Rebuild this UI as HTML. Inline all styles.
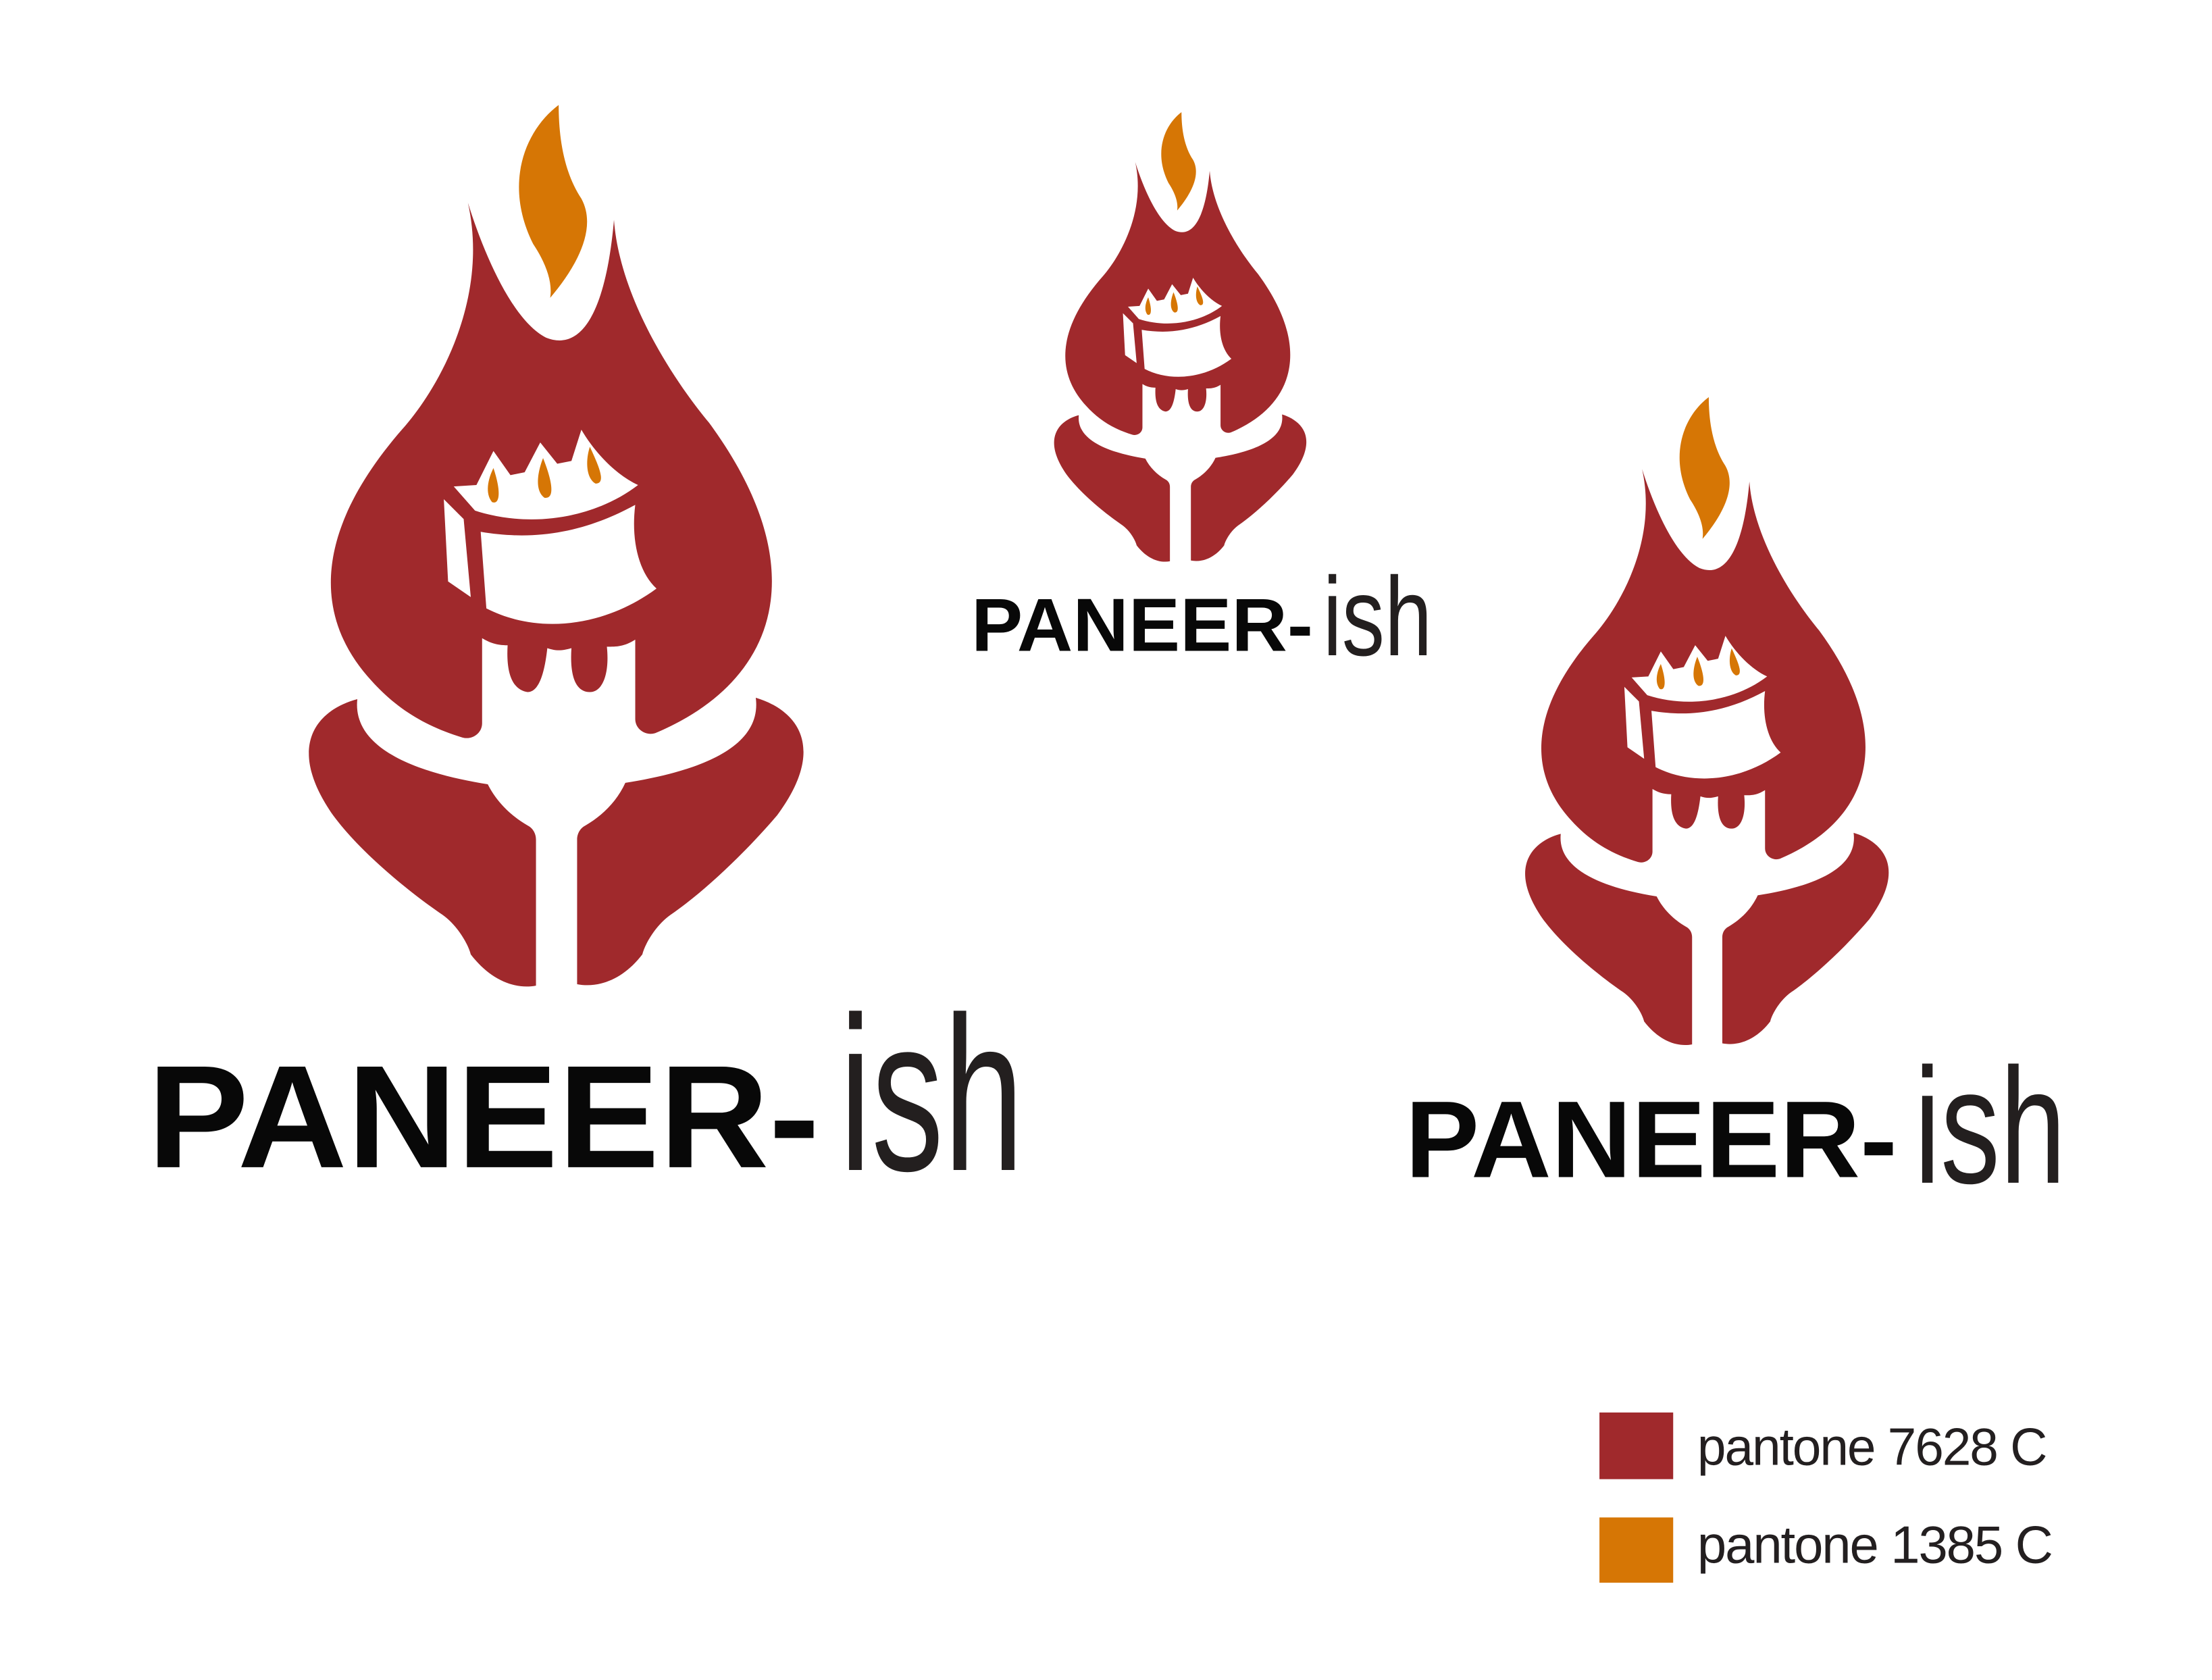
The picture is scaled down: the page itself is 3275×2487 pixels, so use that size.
<!DOCTYPE html>
<html><head><meta charset="utf-8"><style>
html,body{margin:0;padding:0;background:#fff;}
svg{display:block;}
</style></head><body>
<svg width="3275" height="2487" viewBox="0 0 1560 1184.6" xmlns="http://www.w3.org/2000/svg">
<defs>
<g id="logo">
  <path fill="#d67605" d="M394,74 C370,92 355,130 376,172 C384,184 390,198 388,210 C405,190 422,162 410,140 C398,122 394,98 394,74 Z"/>
  <path fill="#a0292c" d="M330,143 C340,175 360,225 385,238 C420,252 430,190 433,155 C437,210 475,268 500,298 C575,400 550,480 462,517 C455,519 448,514 448,507 L448,451 C440,456 435,456 428,456 C430,475 425,488 416,488 C404,488 402,472 403,457 C396,459 392,459 386,457 C384,475 380,488 372,488 C360,486 357,472 358,455 C350,455 345,453 340,450 L340,510 C340,517 333,522 326,520 C300,512 280,500 262,480 C225,440 215,380 286,300 C310,272 345,210 330,143 Z"/>
  <path fill="#fff" d="M320,343 L336,342 L348,318 L360,335 L370,333 L381,312 L393,327 L403,325 L410,303 C420,320 435,335 450,342 C420,365 375,373 335,360 Z"/>
  <path fill="#fff" d="M339,375 C380,382 415,374 448,356 C445,380 450,403 463,415 C425,443 378,447 343,429 Z"/>
  <path fill="#fff" d="M313,352 L327,366 L332,421 L316,410 Z"/>
  <path fill="#d67605" d="M348,330 C344,338 342,348 347,354 C352,356 354,348 348,330 Z"/>
  <path fill="#d67605" d="M383,323 C379,333 377,346 384,351 C392,352 389,338 383,323 Z"/>
  <path fill="#d67605" d="M416,315 C413,324 413,337 420,341 C428,341 422,328 416,315 Z"/>
  <path fill="#a0292c" d="M252,493 C225,500 200,525 235,575 C255,602 290,630 312,645 C322,652 330,665 332,673 C345,690 362,698 378,695 L378,592 C378,588 376,584 372,582 C360,575 350,565 344,553 C300,546 248,530 252,493 Z"/>
  <path fill="#a0292c" d="M533,492 C560,500 585,525 548,575 C525,602 495,630 473,645 C463,652 455,665 453,673 C440,690 423,697 407,694 L407,592 C407,588 409,584 413,582 C425,575 435,565 441,552 C485,545 538,530 533,492 Z"/>
</g>
</defs>
<use href="#logo"/>
<use href="#logo" transform="translate(632.3,41.3) scale(0.51)"/>
<use href="#logo" transform="translate(915.5,225.6) scale(0.735)"/>

<g font-family="'Liberation Sans',sans-serif" font-weight="bold" fill="#080808">
  <text x="104" y="823" font-size="103" textLength="474" lengthAdjust="spacingAndGlyphs">PANEER-</text>
  <text x="685" y="459" font-size="53" textLength="241" lengthAdjust="spacingAndGlyphs">PANEER-</text>
  <text x="991" y="830" font-size="77" textLength="347" lengthAdjust="spacingAndGlyphs">PANEER-</text>
</g>
<g font-family="'Liberation Sans',sans-serif" fill="#231f1f">
  <text x="592" y="825" font-size="155" textLength="130" lengthAdjust="spacingAndGlyphs">ish</text>
  <text x="933" y="462" font-size="79" textLength="77" lengthAdjust="spacingAndGlyphs">ish</text>
  <text x="1350" y="834" font-size="116" textLength="107" lengthAdjust="spacingAndGlyphs">ish</text>
</g>

<rect x="1128" y="996" width="52" height="47" fill="#a0292c"/>
<rect x="1128" y="1070" width="52" height="46" fill="#d67605"/>
<g font-family="'Liberation Sans',sans-serif" fill="#231f20" font-size="37" letter-spacing="-1">
  <text x="1197" y="1033" textLength="246" lengthAdjust="spacingAndGlyphs">pantone 7628 C</text>
  <text x="1197" y="1102" textLength="250" lengthAdjust="spacingAndGlyphs">pantone 1385 C</text>
</g>
</svg>
</body></html>
